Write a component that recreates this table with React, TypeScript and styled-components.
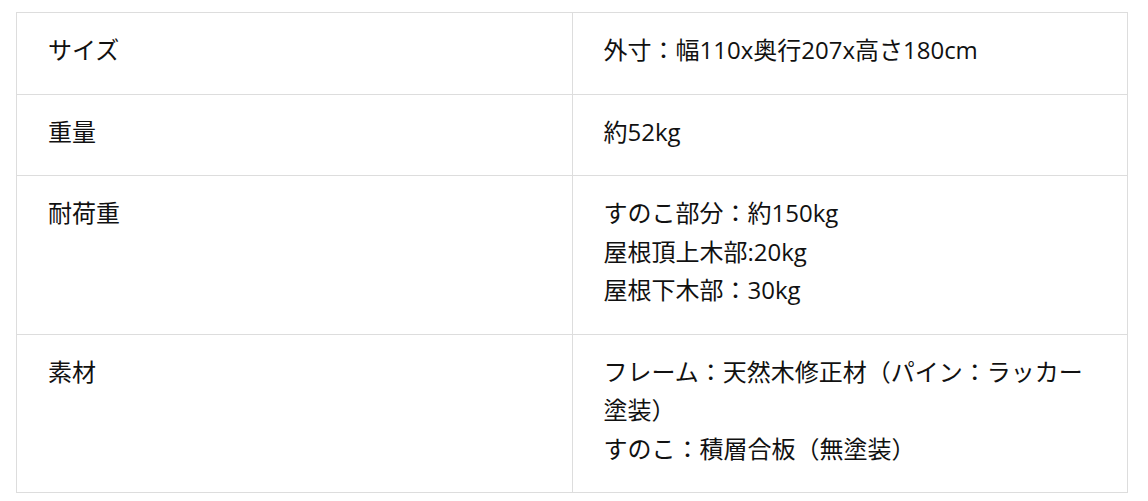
import React from 'react';
import styled, { createGlobalStyle } from 'styled-components';

const GlobalStyle = createGlobalStyle`
  html, body {
    margin: 0;
    padding: 0;
    background: #ffffff;
  }
  body {
    font-family: "Open Sans", "Noto Sans CJK JP", sans-serif;
    color: #111111;
  }
`;

const Page = styled.div`
  padding: 12px 20px 0 16px;
`;

const SpecTable = styled.table`
  width: 100%;
  border-collapse: collapse;
  table-layout: fixed;
`;

const Row = styled.tr``;

const Cell = styled.td`
  width: 50%;
  border: 1px solid #dddddd;
  padding: 18px 32px 24px 31px;
  font-size: 24px;
  line-height: 38.5px;
  vertical-align: top;
  color: #111111;
`;

const Line = styled.div``;

interface Spec {
  label: string;
  values: string[];
}

const specs: Spec[] = [
  { label: 'サイズ', values: ['外寸：幅110x奥行207x高さ180cm'] },
  { label: '重量', values: ['約52kg'] },
  {
    label: '耐荷重',
    values: ['すのこ部分：約150kg', '屋根頂上木部:20kg', '屋根下木部：30kg'],
  },
  {
    label: '素材',
    values: ['フレーム：天然木修正材（パイン：ラッカー塗装）', 'すのこ：積層合板（無塗装）'],
  },
];

const App: React.FC = () => (
  <>
    <GlobalStyle />
    <Page>
      <SpecTable>
        <tbody>
          {specs.map((spec) => (
            <Row key={spec.label}>
              <Cell>{spec.label}</Cell>
              <Cell>
                {spec.values.map((v) => (
                  <Line key={v}>{v}</Line>
                ))}
              </Cell>
            </Row>
          ))}
        </tbody>
      </SpecTable>
    </Page>
  </>
);

export default App;
